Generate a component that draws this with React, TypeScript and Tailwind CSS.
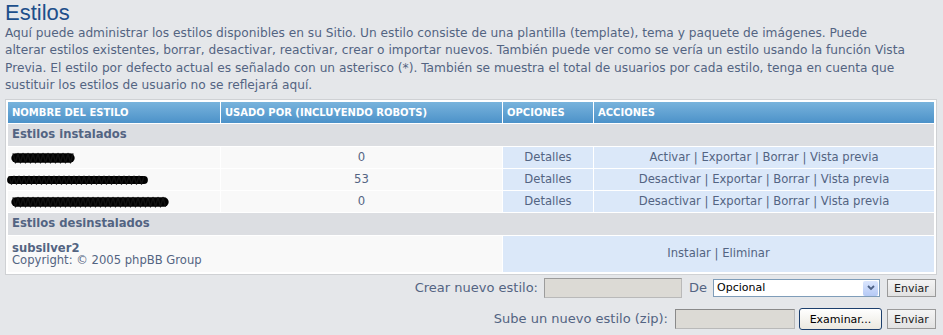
import React from 'react';

// Marcador negro que tapa el nombre del estilo
function Scribble({ w, h }: { w: number; h: number }) {
    const pts: string[] = [];
    const step = 2.5;
    for (let x = 3, i = 0; x <= w - 3; x += step, i++) {
        const y = i % 2 === 0 ? h * 0.12 : h * 0.9;
        pts.push(`${x.toFixed(1)},${y.toFixed(1)}`);
    }
    return (
        <svg width={w} height={h} viewBox={`0 0 ${w} ${h}`} className="block">
            <line x1={h / 2} y1={h / 2} x2={w - h / 2} y2={h / 2} stroke="#000" strokeWidth={h * 0.78} strokeLinecap="round" />
            <polyline points={pts.join(' ')} fill="none" stroke="#111" strokeWidth={1.4} strokeLinejoin="round" />
        </svg>
    );
}

const installed = [
    { w: 66, h: 12, ml: 'ml-[2px]', count: '0', actions: ['Activar', 'Exportar', 'Borrar', 'Vista previa'] },
    { w: 143, h: 10, ml: 'ml-[-2px]', count: '53', actions: ['Desactivar', 'Exportar', 'Borrar', 'Vista previa'] },
    { w: 160, h: 12, ml: 'ml-[2px]', count: '0', actions: ['Desactivar', 'Exportar', 'Borrar', 'Vista previa'] },
];

function Links({ items }: { items: string[] }) {
    return (
        <>
            {items.map((a, i) => (
                <React.Fragment key={a}>
                    {i > 0 && <span> | </span>}
                    <span>{a}</span>
                </React.Fragment>
            ))}
        </>
    );
}

export default function App() {
    return (
        <div className="w-[943px] h-[335px] overflow-hidden bg-[#e5e7ea] text-[#536482] font-['DejaVu_Sans',sans-serif]">
            <div className="pl-[5px] pr-[6px]">
                <h1 className="text-[22px] leading-[25px] text-[#1d4f8b] font-['Liberation_Sans',sans-serif]">Estilos</h1>
                <p className="text-[12.2px] leading-[17.25px]">
                    Aquí puede administrar los estilos disponibles en su Sitio. Un estilo consiste de una plantilla (template), tema y paquete de imágenes. Puede<br />
                    alterar estilos existentes, borrar, desactivar, reactivar, crear o importar nuevos. También puede ver como se vería un estilo usando la función Vista<br />
                    Previa. El estilo por defecto actual es señalado con un asterisco (*). También se muestra el total de usuarios por cada estilo, tenga en cuenta que<br />
                    sustituir los estilos de usuario no se reflejará aquí.
                </p>

                <div className="mt-[5px] w-[932px] border border-[#cfd1d4] bg-white p-px">
                    <table className="w-[928px] table-fixed border-separate border-spacing-px bg-white text-[11.6px]">
                        <thead>
                            <tr className="h-[21px] bg-gradient-to-b from-[#78b3dc] to-[#4c92c9] text-white text-[10px] font-bold uppercase text-left">
                                <th className="w-[212px] px-[4px] font-bold">Nombre del estilo</th>
                                <th className="w-[281px] px-[4px] font-bold">Usado por (incluyendo robots)</th>
                                <th className="w-[90px] px-[4px] font-bold">Opciones</th>
                                <th className="w-[340px] px-[4px] font-bold">Acciones</th>
                            </tr>
                        </thead>
                        <tbody>
                            <tr className="h-[22px] bg-[#dcdee2]">
                                <td colSpan={4} className="px-[4px] font-bold">Estilos instalados</td>
                            </tr>
                            {installed.map((r, i) => (
                                <tr key={i} className="h-[21px]">
                                    <td className="bg-[#f9f9f9] px-0">
                                        <div className={r.ml}>
                                            <Scribble w={r.w} h={r.h} />
                                        </div>
                                    </td>
                                    <td className="bg-[#f9f9f9] text-center">{r.count}</td>
                                    <td className="bg-[#dbe8f9] text-center">Detalles</td>
                                    <td className="bg-[#dbe8f9] text-center">
                                        <Links items={r.actions} />
                                    </td>
                                </tr>
                            ))}
                            <tr className="h-[22px] bg-[#dcdee2]">
                                <td colSpan={4} className="px-[4px] font-bold">Estilos desinstalados</td>
                            </tr>
                            <tr className="h-[36px]">
                                <td colSpan={2} className="bg-[#f9f9f9] px-[4px] leading-[12.5px]">
                                    <div className="font-bold">subsilver2</div>
                                    <div>Copyright: © 2005 phpBB Group</div>
                                </td>
                                <td colSpan={2} className="bg-[#dbe8f9] text-center">
                                    <Links items={['Instalar', 'Eliminar']} />
                                </td>
                            </tr>
                        </tbody>
                    </table>
                </div>

                <div className="flex flex-col items-end pr-px">
                    <div className="mt-[2px] flex h-[22px] items-center">
                        <span className="text-[13px]">Crear nuevo estilo:</span>
                        <div className="ml-[6px] h-[20px] w-[138px] border border-[#b9b9b9] border-t-[#9c9c9c] border-l-[#9c9c9c] bg-[#dcdad5]" />
                        <span className="ml-[7px] text-[13px]">De</span>
                        <div className="ml-[6px] flex h-[18px] w-[167px] items-center border border-[#7f9db9] bg-white pl-[3px] pr-px">
                            <span className="flex-1 text-[11px] text-black">Opcional</span>
                            <div className="flex h-[15px] w-[15px] items-center justify-center rounded-[2px] bg-gradient-to-b from-[#dbe6fd] to-[#b5c9f5]">
                                <svg width="8" height="6" viewBox="0 0 8 6">
                                    <path d="M1 1 L4 4 L7 1" fill="none" stroke="#4d6185" strokeWidth="1.8" />
                                </svg>
                            </div>
                        </div>
                        <button className="ml-[7px] h-[18px] w-[49px] border border-[#9a9a9a] bg-gradient-to-b from-[#f4f4f4] to-[#e2e2e2] text-[11px] leading-none text-[#222]">Enviar</button>
                    </div>
                    <div className="mt-[9px] flex h-[22px] items-center">
                        <span className="text-[13px]">Sube un nuevo estilo (zip):</span>
                        <div className="ml-[7px] h-[20px] w-[120px] border border-[#b9b9b9] border-t-[#8a8a8a] border-l-[#8a8a8a] bg-[#dcdad5]" />
                        <button className="ml-[4px] h-[22px] w-[83px] rounded-[3px] border border-[#1c3f6d] bg-gradient-to-b from-[#ffffff] to-[#ebe9e0] text-[11px] leading-none text-black">Examinar...</button>
                        <button className="ml-[5px] h-[20px] w-[49px] border border-[#9a9a9a] bg-gradient-to-b from-[#f4f4f4] to-[#e2e2e2] text-[11px] leading-none text-[#222]">Enviar</button>
                    </div>
                </div>
            </div>
        </div>
    );
}
